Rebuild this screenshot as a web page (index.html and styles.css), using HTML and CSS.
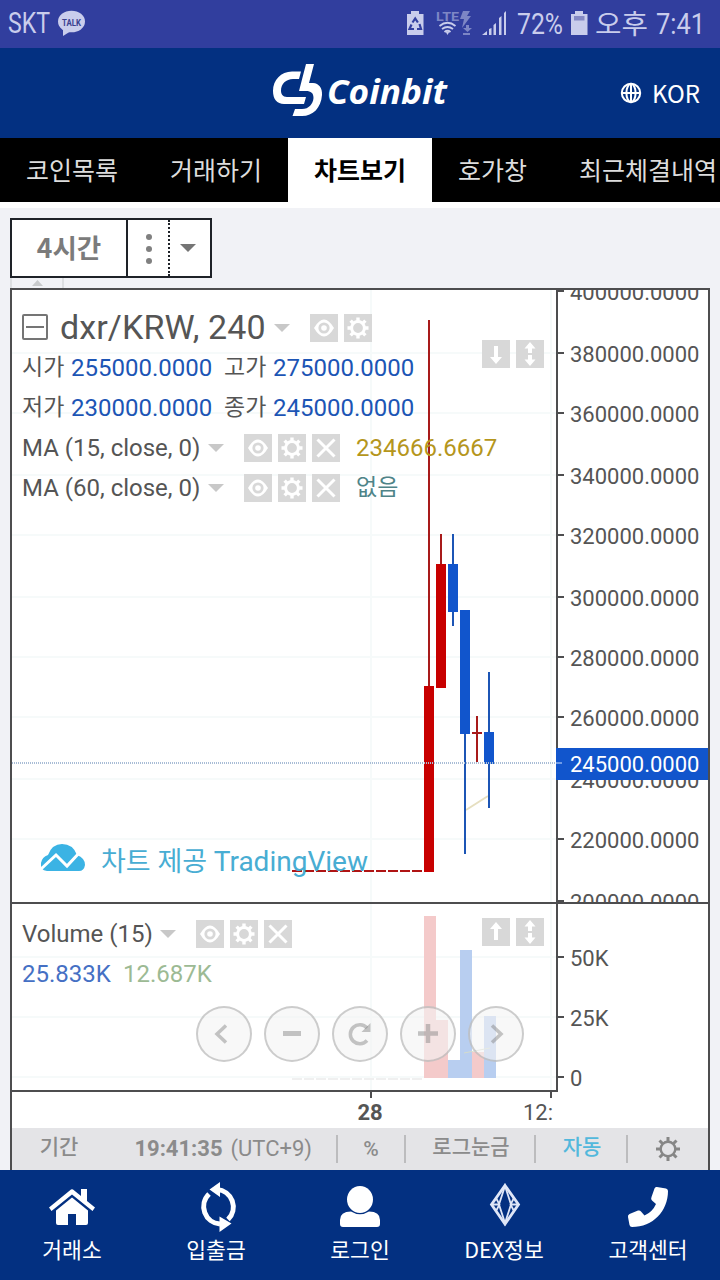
FILE: index.html
```html
<!DOCTYPE html>
<html lang="ko">
<head>
    <meta charset="UTF-8">
    <meta name="viewport" content="width=device-width, initial-scale=1.0">
    <title>Coinbit</title>
    <link rel="stylesheet" href="styles.css">
</head>
<body>
    <!-- shared icons -->
    <svg class="icon-defs">
        <symbol id="eye" viewBox="0 0 28 28">
            <path d="M4 14 Q14 -3 24 14 Q14 31 4 14Z" fill="#fff"/>
            <circle cx="14" cy="14" r="5.6" fill="#d8d8d8"/>
            <circle cx="14" cy="14" r="2.800" fill="#fff"/>
        </symbol>
        <symbol id="gear" viewBox="0 0 28 28">
            <circle cx="14" cy="14" r="6.400" fill="none" stroke="#fff" stroke-width="3"/>
            <g stroke="#fff" stroke-width="3.400">
                <path d="M14 3.500V8M14 20v4.500M3.500 14H8M20 14h4.500"/>
                <path d="M6.600 6.600l3 3M18.400 18.400l3 3M6.600 21.400l3-3M18.400 9.600l3-3"/>
            </g>
        </symbol>
        <symbol id="close" viewBox="0 0 28 28">
            <path d="M5.500 5.500l17 17M22.500 5.500l-17 17" stroke="#fff" stroke-width="3"/>
        </symbol>
        <symbol id="down" viewBox="0 0 28 28">
            <path d="M12 6h4v11h4l-6 7-6-7h4z" fill="#fff"/>
        </symbol>
        <symbol id="up" viewBox="0 0 28 28">
            <path d="M12 22h4V11h4l-6-7-6 7h4z" fill="#fff"/>
        </symbol>
        <symbol id="updown" viewBox="0 0 28 28">
            <path d="M14 2l5.500 6.500H16V13h-4V8.500H8.500zM14 26l5.500-6.500H16V15h-4v4.500H8.500z" fill="#fff"/>
        </symbol>
    </svg>

    <div class="status-bar">
        <svg width="90" height="48">
            <text x="8" y="33" textLength="42" lengthAdjust="spacingAndGlyphs" class="status-text">SKT</text>
            <ellipse cx="71.500" cy="21.500" rx="13.500" ry="10.800" fill="#c9cdec"/>
            <path d="M63 29v7l8-5z" fill="#c9cdec"/>
            <text x="62" y="25.500" textLength="19" lengthAdjust="spacingAndGlyphs" class="talk-text">TALK</text>
        </svg>
        <svg width="320" height="48">
            <g fill="#c9cdec">
                <path d="M7 14h4v-3h8v3h4.500v21H7z"/>
                <g fill="none" stroke="#3340a0" stroke-width="2.200">
                    <path d="M12.500 22.500l2.700-4 2.700 4M19.500 24l1.500 5h-4M14 29h-4.500l2-4.500"/>
                </g>
                <g opacity=".5">
                    <text x="36" y="21" textLength="23" lengthAdjust="spacingAndGlyphs" class="lte-text">LTE</text>
                    <path d="M63 11h7l-3 5h4l-9 12 2-9h-4zM66 25h3v4h-3zM63 33h7v2h-7zM63 28h9l-4.500 4z"/>
                </g>
                <path d="M45.500 31.500h4l-2 3.500z"/>
                <path d="M82 35l5-4v4zM89 29l2.500-1v7H89zM93.500 25l2.500-2v12h-2.500zM99 18l2.500-2v19H99zM104 13l2-2v24h-2z"/>
                <path d="M171 14h4v-3h8v3h4.500v21H171z"/>
            </g>
            <path d="M39.500 26q8-6.500 16 0M42 29q5.500-4 11 0M44.500 32q3-2.500 6 0" fill="none" stroke="#c9cdec" stroke-width="1.800"/>
            <path d="M174 16h10.500v4.500H174z" fill="#8489c4"/>
            <text x="117" y="34" textLength="46" lengthAdjust="spacingAndGlyphs" class="status-text">72%</text>
            <text x="195" y="34" textLength="53" lengthAdjust="spacingAndGlyphs" class="status-text korean">오후</text>
            <text x="256" y="34" textLength="49" lengthAdjust="spacingAndGlyphs" class="status-text">7:41</text>
        </svg>
    </div>

    <header class="header">
        <svg class="logo" width="180" height="60" viewBox="270 60 180 60">
            <g fill="#fff">
                <path d="M301 71.500H292C281 71.500 273 80 273 91C273 99 277 104 284 104H304L306 97H287C282.500 97 281 94 281 90.500C281 84 286 79 293 79H299z"/>
                <path d="M306 64H314L309 83H313C319 83.500 322.500 88 322 95C321 108 313 116 302 116H292.500L295 109H302C309 109 313 104 313.500 98C313.500 93 311 91 306 91H299z"/>
                <text x="327" y="104" textLength="120" lengthAdjust="spacingAndGlyphs" class="logo-text">Coinbit</text>
            </g>
        </svg>
        <div class="language">
            <svg width="22" height="22" viewBox="0 0 22 22" fill="none" stroke="#fff" stroke-width="2">
                <circle cx="11" cy="11" r="9.200"/>
                <ellipse cx="11" cy="11" rx="4.600" ry="9.200"/>
                <path d="M2 11h18M11 2v18"/>
            </svg>
            <span>KOR</span>
        </div>
    </header>

    <nav class="tabs">
        <a class="tab">코인목록</a>
        <a class="tab">거래하기</a>
        <a class="tab active">차트보기</a>
        <a class="tab">호가창</a>
        <a class="tab">최근체결내역</a>
    </nav>

    <main class="content">
        <div class="toolbar">
            <div class="interval">4시간</div>
            <div class="dots"><i></i><i></i><i></i></div>
            <div class="toggle"><i class="caret dark"></i></div>
        </div>
        <div class="stub"><i></i></div>

        <div class="chart">
            <section class="pane price-pane">
                <svg class="plot" width="544" height="612" viewBox="12 290 544 612" shape-rendering="crispEdges">
                    <path class="grid" d="M12 353h544M12 413h544M12 475h544M12 535h544M12 597h544M12 657h544M12 717h544M12 779h544M12 839h544M371 290v612M551 290v612"/>
                    <path d="M292 871H424" stroke="#b01414" stroke-width="2" stroke-dasharray="10 2"/>
                    <path d="M466 810L488 796" stroke="#e6dfc0" stroke-width="2" shape-rendering="auto"/>
                    <g fill="#a81a1a">
                        <rect x="428" y="320" width="2" height="366"/>
                        <rect x="440" y="534" width="2" height="30"/>
                        <rect x="476" y="716" width="2" height="46"/>
                        <rect x="472" y="732" width="10" height="2"/>
                    </g>
                    <g fill="#c80000">
                        <rect x="424" y="686" width="10" height="186"/>
                        <rect x="436" y="564" width="10" height="124"/>
                    </g>
                    <g fill="#1c55b5">
                        <rect x="452" y="534" width="2" height="92"/>
                        <rect x="464" y="734" width="2" height="120"/>
                        <rect x="488" y="672" width="2" height="136"/>
                    </g>
                    <g fill="#1155cc">
                        <rect x="448" y="564" width="10" height="48"/>
                        <rect x="460" y="610" width="10" height="124"/>
                        <rect x="484" y="732" width="10" height="32"/>
                    </g>
                    <path d="M12 763H556" stroke="#a9bdd6" stroke-width="2" stroke-dasharray="1 1"/>
                </svg>

                <div class="legend">
                    <div class="row title-row">
                        <span class="collapse"></span>
                        <span class="symbol">dxr/KRW, 240</span>
                        <i class="caret"></i>
                        <span class="buttons">
                            <svg><use href="#eye"/></svg>
                            <svg><use href="#gear"/></svg>
                        </span>
                    </div>
                    <div class="row ohlc">
                        <span>시가</span><b>255000.0000</b><span>고가</span><b>275000.0000</b>
                    </div>
                    <div class="row ohlc">
                        <span>저가</span><b>230000.0000</b><span>종가</span><b>245000.0000</b>
                    </div>
                    <div class="row">
                        <span class="study">MA (15, close, 0)</span>
                        <i class="caret"></i>
                        <span class="buttons">
                            <svg><use href="#eye"/></svg>
                            <svg><use href="#gear"/></svg>
                            <svg><use href="#close"/></svg>
                        </span>
                        <span class="value ma15">234666.6667</span>
                    </div>
                    <div class="row">
                        <span class="study">MA (60, close, 0)</span>
                        <i class="caret"></i>
                        <span class="buttons">
                            <svg><use href="#eye"/></svg>
                            <svg><use href="#gear"/></svg>
                            <svg><use href="#close"/></svg>
                        </span>
                        <span class="value ma60">없음</span>
                    </div>
                </div>

                <div class="pane-buttons">
                    <svg><use href="#down"/></svg>
                    <svg><use href="#updown"/></svg>
                </div>

                <div class="brand">
                    <svg width="46" height="30" viewBox="40 842 46 30">
                        <path d="M47 870Q40 869 41 862Q42 856 48 854Q52 843 62 843Q73 843 77 854Q85 857 85 864Q84 870 79 870z" fill="#3bb3e4"/>
                        <path d="M41 868L56 854L67 865L80 851" fill="none" stroke="#fff" stroke-width="3"/>
                    </svg>
                    <span>차트 제공 <b>TradingView</b></span>
                </div>
            </section>

            <svg class="axis price-axis" width="152" height="612" viewBox="556 290 152 612">
                <path class="ticks" d="M558 291h6M558 353h6M558 413h6M558 475h6M558 535h6M558 597h6M558 657h6M558 717h6M558 779h6M558 839h6M558 901h6"/>
                <text x="570" y="300">400000.0000</text>
                <text x="570" y="362">380000.0000</text>
                <text x="570" y="422">360000.0000</text>
                <text x="570" y="484">340000.0000</text>
                <text x="570" y="544">320000.0000</text>
                <text x="570" y="606">300000.0000</text>
                <text x="570" y="666">280000.0000</text>
                <text x="570" y="726">260000.0000</text>
                <text x="570" y="788">240000.0000</text>
                <text x="570" y="848">220000.0000</text>
                <text x="570" y="910">200000.0000</text>
                <rect x="556" y="748" width="152" height="32" fill="#1155cc"/>
                <path d="M556 763h6" stroke="#6f9be6" stroke-width="2"/>
                <text x="570" y="772" class="last-price">245000.0000</text>
            </svg>

            <section class="pane volume-pane">
                <svg class="plot" width="544" height="186" viewBox="12 904 544 186" shape-rendering="crispEdges">
                    <path class="grid" d="M12 957h544M12 1017h544M12 1077h544M371 904v186M551 904v186"/>
                    <path d="M292 1079H424" stroke="#f0f0f0" stroke-width="2" stroke-dasharray="10 2"/>
                    <g fill="#f4caca">
                        <rect x="424" y="916" width="12" height="162"/>
                        <rect x="436" y="1020" width="12" height="58"/>
                        <rect x="472" y="1052" width="12" height="26"/>
                    </g>
                    <g fill="#b8cef0">
                        <rect x="448" y="1060" width="12" height="18"/>
                        <rect x="460" y="950" width="12" height="128"/>
                        <rect x="484" y="1016" width="12" height="62"/>
                    </g>
                    <path d="M464 1053L490 1048" stroke="#d5dccb" stroke-width="1" shape-rendering="auto"/>
                </svg>

                <div class="legend">
                    <div class="row">
                        <span class="volume-name">Volume (15)</span>
                        <i class="caret"></i>
                        <span class="buttons">
                            <svg><use href="#eye"/></svg>
                            <svg><use href="#gear"/></svg>
                            <svg><use href="#close"/></svg>
                        </span>
                    </div>
                    <div class="row volume-values">
                        <span class="vol">25.833K</span><span class="vol-ma">12.687K</span>
                    </div>
                </div>

                <div class="pane-buttons">
                    <svg><use href="#up"/></svg>
                    <svg><use href="#updown"/></svg>
                </div>

                <div class="controls">
                    <svg viewBox="0 0 52 52"><path d="M28 17.500l-9 8.500 9 8.500"/></svg>
                    <svg viewBox="0 0 52 52"><path d="M17 25.500h18" stroke-width="5"/></svg>
                    <svg viewBox="0 0 52 52"><path d="M33 32.500A9.500 9.500 0 1 1 33 20" stroke-width="3.500"/><path d="M36.500 15v9h-9z" class="fill"/></svg>
                    <svg viewBox="0 0 52 52"><path d="M16 25.500h20M26 16v19" stroke-width="4.500"/></svg>
                    <svg viewBox="0 0 52 52"><path d="M22 17.500l9 8.500-9 8.500"/></svg>
                </div>
            </section>

            <svg class="axis volume-axis" width="150" height="188" viewBox="558 904 150 188">
                <path class="ticks" d="M558 957h6M558 1017h6M558 1077h6"/>
                <text x="570" y="966">50K</text>
                <text x="570" y="1026">25K</text>
                <text x="570" y="1086">0</text>
            </svg>

            <svg class="axis time-axis" width="696" height="36" viewBox="12 1092 696 36">
                <path class="ticks" d="M371 1092v6M551 1092v6"/>
                <text x="370" y="1120" text-anchor="middle" class="day">28</text>
                <text x="523" y="1120">12:</text>
            </svg>

            <div class="bottom-bar">
                <span class="ko">기간</span>
                <span class="clock"><b>19:41:35</b> (UTC+9)</span>
                <span>%</span>
                <span class="ko">로그눈금</span>
                <span class="ko auto">자동</span>
                <span>
                    <svg width="26" height="26" viewBox="-13 -13 26 26" fill="none" stroke="#868686">
                        <circle r="7.300" stroke-width="2.400"/>
                        <path stroke-width="3" d="M0-12v4M0 8v4M-12 0h4M8 0h4M-8.500-8.500l3 3M5.500 5.500l3 3M-8.500 8.500l3-3M5.500-5.500l3-3"/>
                    </svg>
                </span>
            </div>
        </div>
    </main>

    <nav class="bottom-nav">
        <a>
            <svg viewBox="0 0 50 50" fill="#fff">
                <path d="M2 25.500L24 7.500Q25 6.800 26 7.500L34 14V7h6v12L48 25.500L45.500 29L25 12.500L4.500 29z"/>
                <path d="M9 28.500L25 15.500L41 28.500V41Q41 43 39 43H29V32H21V43H11Q9 43 9 41z"/>
            </svg>
            <span>거래소</span>
        </a>
        <a>
            <svg viewBox="0 0 50 50">
                <path d="M18 12A17.500 17.500 0 0 0 29 42M37 37.500A17.500 17.500 0 0 0 26 7.500" fill="none" stroke="#fff" stroke-width="5"/>
                <path d="M29 0v15L18.500 7.500zM28.500 50V34.500L40.500 41.500z" fill="#fff"/>
            </svg>
            <span>입출금</span>
        </a>
        <a>
            <svg viewBox="0 0 50 50" fill="#fff">
                <ellipse cx="25" cy="17.500" rx="13" ry="13.500"/>
                <path d="M16 29.500Q25 35 34 29.500Q45 29.500 45 38V42Q45 45 42 45H8Q5 45 5 42V38Q5 29.500 16 29.500z"/>
            </svg>
            <span>로그인</span>
        </a>
        <a>
            <svg viewBox="0 0 50 50" fill="none" stroke="#dfe6f7" stroke-width="2.800">
                <path d="M26 3.500L39.500 22.500L26 42L12.500 22.500z"/>
                <path d="M26 4L20 22.500L26 41L32 22.500zM12 22.500h8M32 22.500h8M17 16l3.500 6.500-3.500 6.500M35 16l-3.500 6.500 3.500 6.500" stroke-width="1.800"/>
            </svg>
            <span>DEX정보</span>
        </a>
        <a>
            <svg viewBox="0 0 50 50" fill="#fff">
                <path d="M34 5L43 6.500Q45 7 45 9C45 29 30 45 9 45Q7 45 6.500 43L5 35Q4.600 33 6.500 32L15 28.500Q17 28 18 29.500L21.500 33.500Q29.500 30 33 22L29 18.500Q27.500 17 28.500 15L31.500 6.500Q32 4.500 34 5z"/>
            </svg>
            <span>고객센터</span>
        </a>
    </nav>
</body>
</html>
```
FILE: styles.css
```css
*{
    box-sizing: border-box;
}
body{
    margin: 0;
    width: 720px;
    height: 1280px;
    display: flex;
    flex-direction: column;
    overflow: hidden;
    background-color: #f1f2f6;
    color: #555;
    font-family: Roboto, "Noto Sans CJK KR", sans-serif;
}
svg{
    display: block;
    flex-shrink: 0;
}
.icon-defs{
    width: 0;
    height: 0;
    position: absolute;
}

/* phone status bar */
.status-bar{
    height: 48px;
    flex-shrink: 0;
    display: flex;
    justify-content: space-between;
    background-color: #313e9e;
}
.status-text{
    font-size: 29px;
    fill: #c9cdec;
}
.status-text.korean{
    font-size: 27px;
}
.talk-text{
    font-size: 9px;
    font-weight: bold;
    fill: #3a418f;
}
.lte-text{
    font-size: 13px;
    font-weight: bold;
}

.header{
    height: 90px;
    flex-shrink: 0;
    display: grid;
    grid-template-columns: 1fr 180px 1fr;
    align-items: center;
    padding-bottom: 6px;
    background-color: #033081;
    color: white;
}
.logo{
    grid-column: 2;
}
.logo-text{
    font-family: "Noto Sans", sans-serif;
    font-size: 34px;
    font-weight: bold;
    font-style: italic;
}
.language{
    display: flex;
    align-items: center;
    justify-content: flex-end;
    gap: 10px;
    padding: 6px 20px 0 0;
    font-family: "Noto Sans CJK KR", sans-serif;
    font-size: 24px;
    line-height: 30px;
}

.tabs{
    height: 70px;
    flex-shrink: 0;
    display: flex;
    overflow: hidden;
    background: linear-gradient(black 64px, white 64px);
    font-family: "Noto Sans CJK KR", sans-serif;
}
.tab{
    flex-shrink: 0;
    padding: 0 26px;
    color: #ddd;
    font-size: 25px;
    line-height: 63px;
}
.tab.active{
    background-color: white;
    color: black;
    font-weight: bold;
}

.content{
    height: 962px;
    flex-shrink: 0;
    padding: 10px 10px 0;
}
.toolbar{
    display: flex;
    width: 202px;
    height: 60px;
    border: 2px solid #1e2228;
    background-color: white;
}
.interval{
    width: 116px;
    border-right: 2px solid #1e2228;
    color: #7b7b7b;
    font-family: "Noto Sans CJK KR", sans-serif;
    font-size: 26.5px;
    font-weight: bold;
    line-height: 54px;
    text-align: center;
}
.dots{
    width: 42px;
    display: flex;
    flex-direction: column;
    align-items: center;
    justify-content: center;
    gap: 6px;
    padding: 2px 0 0 2px;
    border-right: 2px dotted #1e2228;
}
.dots i{
    width: 6px;
    height: 6px;
    border-radius: 50%;
    background-color: #808080;
}
.toggle{
    flex: 1;
    display: flex;
    align-items: center;
    padding-left: 10px;
}
.caret{
    width: 16px;
    height: 8px;
    background-color: #c8c8c8;
    clip-path: polygon(0 0, 100% 0, 50% 100%);
}
.caret.dark{
    background-color: #757575;
}
.stub{
    width: 54px;
    height: 10px;
    padding: 2px 0 0 20px;
    border: solid #dddfe2;
    border-width: 0 2px;
}
.stub i{
    display: block;
    width: 11px;
    height: 6px;
    background-color: #c8cacc;
    clip-path: polygon(50% 0, 100% 100%, 0 100%);
}

/* chart */
.chart{
    width: 700px;
    height: 882px;
    display: grid;
    grid-template-columns: 546px 150px;
    grid-template-rows: 614px 188px 36px 42px;
    border: 2px solid #4d4d4f;
    border-bottom: none;
    background-color: white;
}
.pane{
    position: relative;
    border-right: 2px solid #4d4d4f;
    border-bottom: 2px solid #4d4d4f;
}
.plot{
    position: absolute;
    top: 0;
    left: 0;
}
.grid{
    fill: none;
    stroke: #f6fafa;
    stroke-width: 2;
}
.axis text{
    font-size: 22px;
    fill: #555;
}
.axis .day{
    font-weight: bold;
}
.axis .last-price{
    fill: white;
}
.ticks{
    stroke: #4d4d4f;
    stroke-width: 2;
}
.price-axis{
    position: relative;
    box-sizing: content-box;
    margin-left: -2px;
    border-bottom: 2px solid #4d4d4f;
    overflow: hidden;
}
.time-axis{
    grid-column: 1 / 3;
}

.legend{
    position: relative;
    padding: 18px 0 0 10px;
    font-size: 24px;
}
.volume-pane .legend{
    padding-top: 10px;
}
.row{
    display: flex;
    align-items: center;
    height: 40px;
    line-height: 40px;
    white-space: nowrap;
}
.collapse{
    width: 26px;
    height: 26px;
    margin: -2px 12px 0 0;
    border: 2px solid #757575;
    border-radius: 2px;
    background: linear-gradient(#757575, #757575) center / 18px 2px no-repeat;
}
.symbol{
    width: 214px;
    margin-top: -3px;
    font-size: 34px;
    letter-spacing: .1px;
}
.title-row .buttons{
    margin-left: 20px;
}
.buttons{
    display: flex;
    gap: 6px;
    margin-left: 20px;
}
.buttons svg, .pane-buttons svg{
    width: 28px;
    height: 28px;
    background-color: #d8d8d8;
}
.ohlc span{
    width: 49px;
    font-size: 23px;
}
.ohlc b{
    width: 153px;
    color: #1c55b5;
    font-weight: normal;
}
.study{
    width: 186px;
}
.value{
    margin-left: 16px;
}
.ma15{
    color: #b5961c;
}
.ma60{
    color: #4f8488;
    font-size: 23px;
}
.volume-name{
    width: 138px;
}
.vol{
    width: 101px;
    color: #4570c4;
}
.vol-ma{
    color: #9cba94;
}
.pane-buttons{
    position: absolute;
    top: 50px;
    right: 12px;
    display: flex;
    gap: 6px;
}
.volume-pane .pane-buttons{
    top: 14px;
}
.brand{
    position: absolute;
    left: 28px;
    bottom: 22px;
    display: flex;
    align-items: center;
    gap: 15px;
    color: #48add3;
    font-size: 27px;
    line-height: 40px;
    white-space: nowrap;
}
.brand svg{
    margin-top: -4px;
}
.brand span{
    padding-top: 2px;
    margin-bottom: -2px;
}
.brand b{
    font-size: 28px;
    font-weight: normal;
}
.controls{
    position: absolute;
    top: 102px;
    left: 184px;
    display: flex;
    gap: 12px;
}
.controls svg{
    width: 56px;
    height: 56px;
    border: 2px solid rgba(150, 150, 150, .45);
    border-radius: 50%;
    background-color: rgba(243, 243, 243, .6);
    fill: none;
    stroke: rgba(120, 120, 120, .42);
    stroke-width: 3.5;
}
.controls .fill{
    fill: rgba(120, 120, 120, .42);
    stroke: none;
}

.bottom-bar{
    grid-column: 1 / 3;
    display: grid;
    grid-template-columns: 92px 232px 68px 130px 92px 82px;
    align-items: center;
    background-color: #e4e4e7;
    color: #8b8b8b;
}
.bottom-bar span{
    height: 28px;
    display: flex;
    align-items: center;
    justify-content: center;
    border-left: 2px solid #bcbcbe;
    font-size: 21px;
    font-weight: 500;
}
.bottom-bar .ko{
    padding-left: 2px;
    line-height: 24px;
    padding-bottom: 4px;
}
.bottom-bar span:nth-child(-n+2){
    border-left: none;
}
.bottom-bar .clock{
    justify-content: flex-end;
    gap: 8px;
    padding: 0 24px 2px 0;
    font-size: 22px;
    font-weight: normal;
}
.bottom-bar .auto{
    color: #52b8dc;
}

.bottom-nav{
    height: 110px;
    flex-shrink: 0;
    display: grid;
    grid-template-columns: repeat(5, 144px);
    background-color: #033081;
}
.bottom-nav a{
    display: flex;
    flex-direction: column;
    align-items: center;
    padding-top: 12px;
    color: white;
    font-family: "Noto Sans CJK KR", sans-serif;
    font-size: 21.5px;
    line-height: 34px;
}
.bottom-nav svg{
    width: 50px;
    height: 50px;
    overflow: visible;
}
```
